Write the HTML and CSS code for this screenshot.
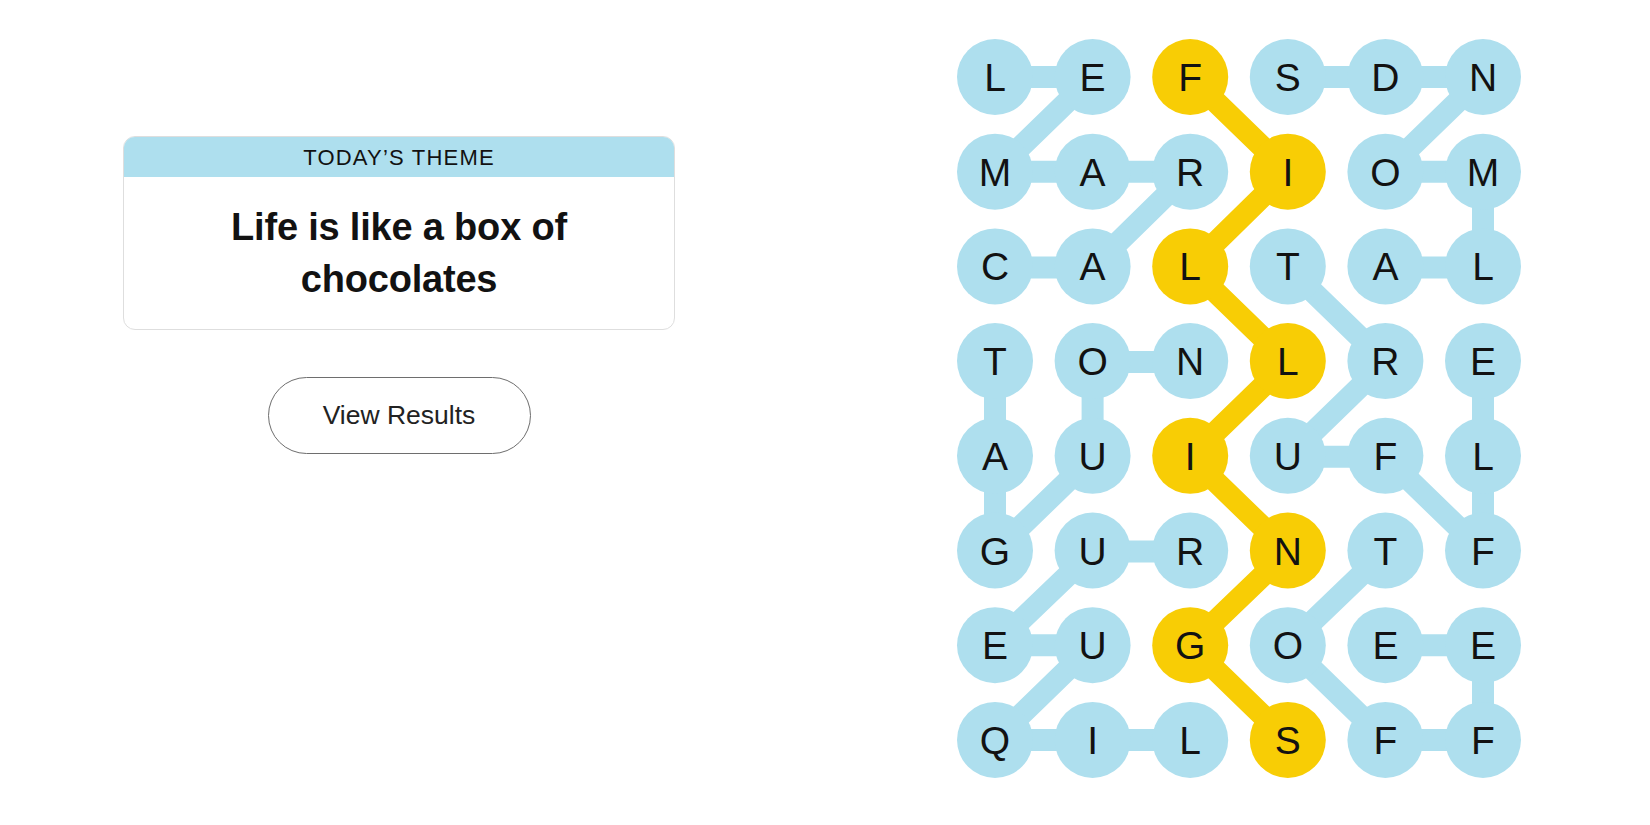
FILE: index.html
```html
<!DOCTYPE html>
<html lang="en">
<head>
<meta charset="utf-8">
<title>Strands</title>
<link rel="stylesheet" href="styles.css">
</head>
<body>
<div class="page">
  <div class="left">
    <div class="theme-card">
      <div class="theme-head">TODAY’S THEME</div>
      <div class="theme-body">Life is like a box of chocolates</div>
    </div>
    <button class="results-btn">View Results</button>
  </div>
  <div class="board">
    <svg class="board-svg" width="580" height="780" viewBox="950 30 580 780" xmlns="http://www.w3.org/2000/svg">
      <g class="links blue" stroke="#aedfee" stroke-width="22" stroke-linecap="round" fill="none">
        <!-- CARAMEL -->
        <polyline points="995,267.4 1092.6,267.4 1190.2,171.7 1092.6,171.7 995,171.7 1092.6,77 995,77"/>
        <!-- ALMONDS -->
        <polyline points="1385.4,267.4 1483,267.4 1483,171.7 1385.4,171.7 1483,77 1385.4,77 1287.8,77"/>
        <!-- TRUFFLE -->
        <polyline points="1287.8,267.4 1385.4,362.1 1287.8,456.8 1385.4,456.8 1483,551.5 1483,456.8 1483,362.1"/>
        <!-- NOUGAT -->
        <polyline points="1190.2,362.1 1092.6,362.1 1092.6,456.8 995,551.5 995,456.8 995,362.1"/>
        <!-- LIQUEUR -->
        <polyline points="1190.2,740 1092.6,740 995,740 1092.6,645.2 995,645.2 1092.6,551.5 1190.2,551.5"/>
        <!-- TOFFEE -->
        <polyline points="1385.4,551.5 1287.8,645.2 1385.4,740 1483,740 1483,645.2 1385.4,645.2"/>
      </g>
      <g class="links yellow" stroke="#f8cd05" stroke-width="22" stroke-linecap="round" fill="none">
        <polyline points="1190.2,77 1287.8,171.7 1190.2,267.4 1287.8,362.1 1190.2,456.8 1287.8,551.5 1190.2,645.2 1287.8,740"/>
      </g>
      <g id="cells"></g>
    </svg>
  </div>
</div>
<script src="app.js"></script>
</body>
</html>
```

FILE: app.js
```js
(function () {
  var rows = ["LEFSDN", "MARIOM", "CALTAL", "TONLRE", "AUIUFL", "GURNTF", "EUGOEE", "QILSFF"];
  var yellow = { "0,2": 1, "1,3": 1, "2,2": 1, "3,3": 1, "4,2": 1, "5,3": 1, "6,2": 1, "7,3": 1 };
  var ns = "http://www.w3.org/2000/svg";
  var g = document.getElementById("cells");
  for (var r = 0; r < rows.length; r++) {
    for (var c = 0; c < 6; c++) {
      var x = 995 + 97.6 * c;
      var y = 77 + 94.7 * r;
      var circle = document.createElementNS(ns, "circle");
      circle.setAttribute("cx", x);
      circle.setAttribute("cy", y);
      circle.setAttribute("r", 38);
      circle.setAttribute("class", yellow[r + "," + c] ? "cell spangram" : "cell");
      g.appendChild(circle);
      var t = document.createElementNS(ns, "text");
      t.setAttribute("x", x);
      t.setAttribute("y", y + 14);
      t.setAttribute("class", "letter");
      t.textContent = rows[r].charAt(c);
      g.appendChild(t);
    }
  }
})();
```

FILE: styles.css
```css
html, body {
  margin: 0;
  padding: 0;
  background: #ffffff;
}

body {
  font-family: "Liberation Sans", Arial, sans-serif;
  color: #121212;
}

.page {
  display: flex;
  width: 1650px;
  height: 825px;
  overflow: hidden;
}

.left {
  display: flex;
  flex-direction: column;
  align-items: center;
  width: 552px;
  padding-left: 123px;
  padding-top: 136px;
}

.theme-card {
  width: 552px;
  box-sizing: border-box;
  border: 1px solid #dedede;
  border-radius: 12px;
  overflow: hidden;
}

.theme-head {
  background: #aedfee;
  height: 40px;
  line-height: 42px;
  text-align: center;
  font-size: 22px;
  letter-spacing: 1.2px;
  color: #121212;
}

.theme-body {
  padding: 24px 50px 24px;
  height: 104px;
  text-align: center;
  font-weight: 700;
  font-size: 38px;
  line-height: 52px;
  color: #121212;
  letter-spacing: -0.2px;
}

.results-btn {
  margin-top: 47px;
  width: 263px;
  height: 77px;
  border: 1px solid #6e6e6e;
  border-radius: 40px;
  background: #ffffff;
  font-family: "Liberation Sans", Arial, sans-serif;
  font-size: 26.5px;
  color: #222222;
  padding: 0;
}

.board {
  margin-left: 275px;
  padding-top: 30px;
}

.board-svg {
  display: block;
}

.cell {
  fill: #aedfee;
}

.cell.spangram {
  fill: #f8cd05;
}

.letter {
  font-family: "Liberation Sans", Arial, sans-serif;
  font-size: 39px;
  text-anchor: middle;
  fill: #121212;
}
```
